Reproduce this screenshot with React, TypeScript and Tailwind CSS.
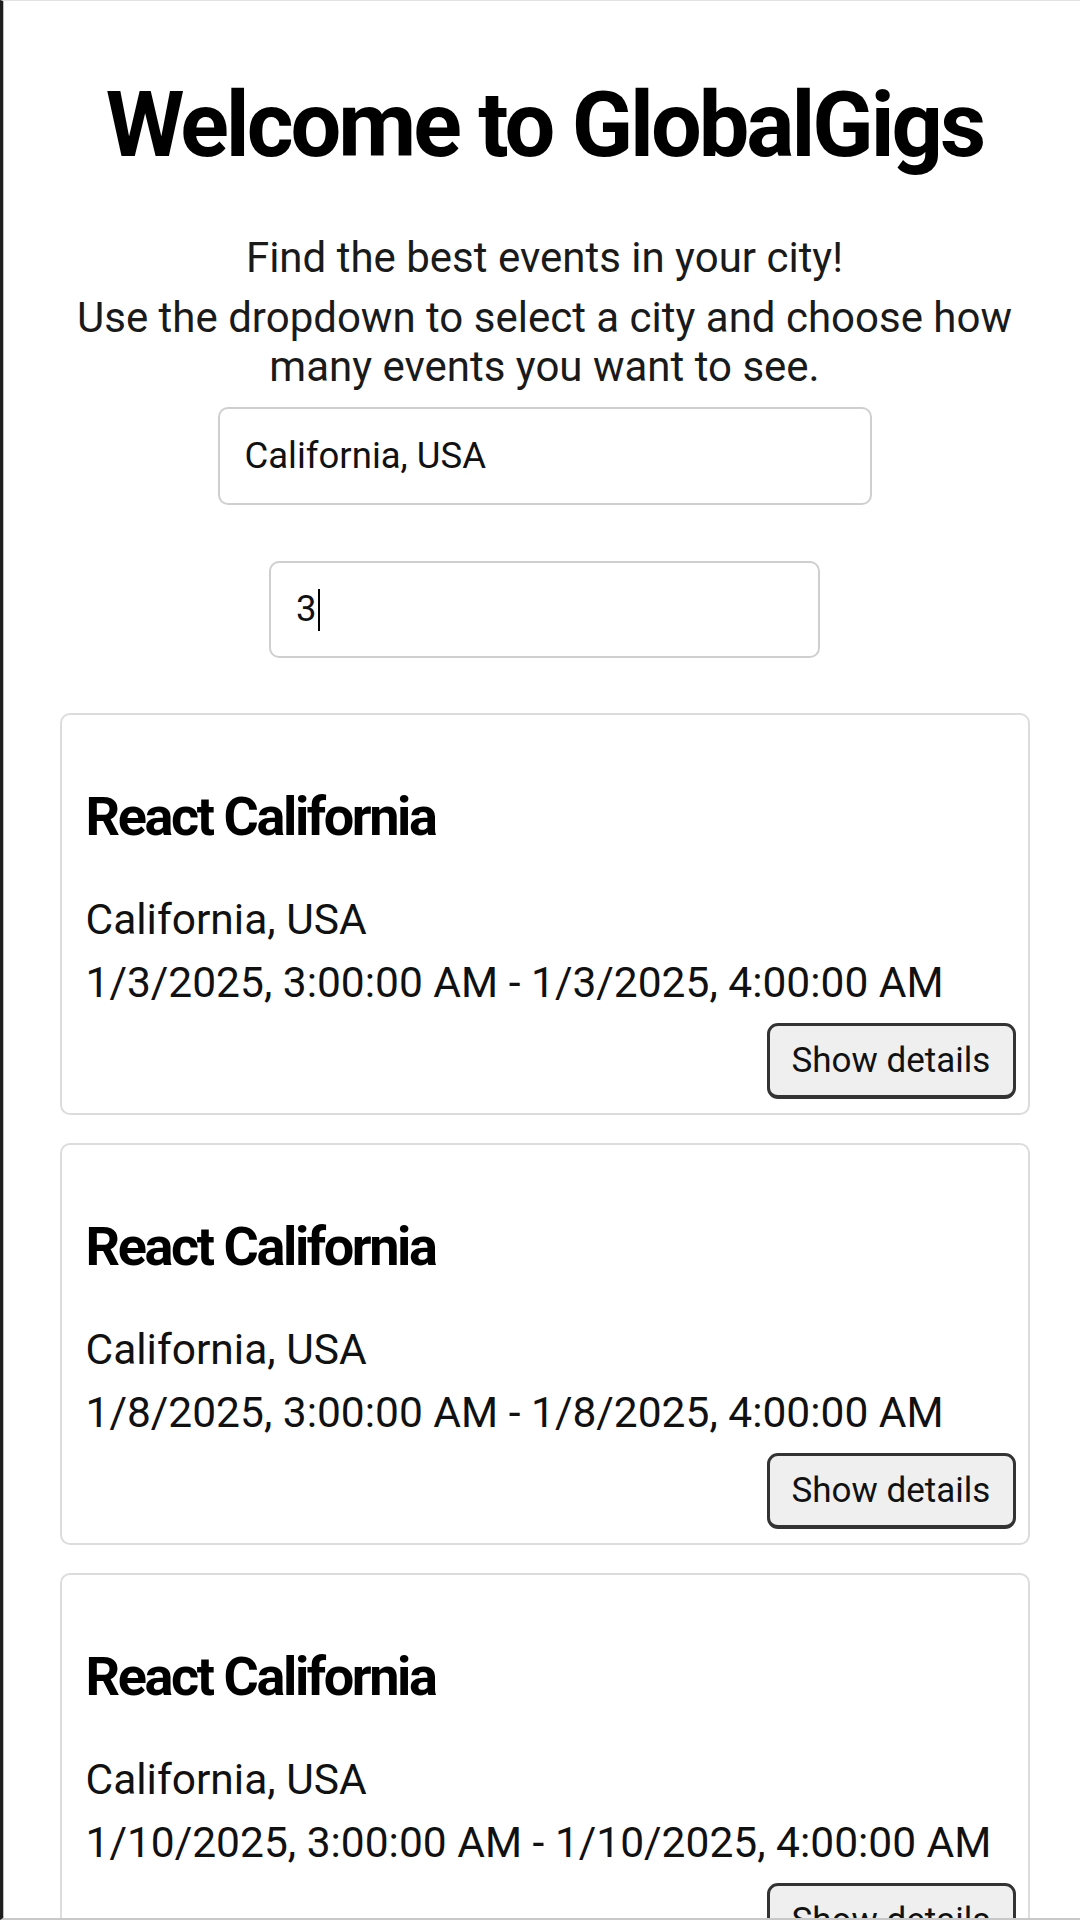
import React from "react";

type Ev = { title: string; location: string; time: string };

const events: Ev[] = [
  {
    title: "React California",
    location: "California, USA",
    time: "1/3/2025, 3:00:00 AM - 1/3/2025, 4:00:00 AM",
  },
  {
    title: "React California",
    location: "California, USA",
    time: "1/8/2025, 3:00:00 AM - 1/8/2025, 4:00:00 AM",
  },
  {
    title: "React California",
    location: "California, USA",
    time: "1/10/2025, 3:00:00 AM - 1/10/2025, 4:00:00 AM",
  },
];

function EventCard({ ev }: { ev: Ev }) {
  return (
    <div className="w-[970px] mx-auto border-2 border-[#dcdcdc] rounded-[10px] pl-[24px] pr-[12px] pt-[70px] pb-[14px]">
      <h2 className="text-[54px] leading-[64px] font-bold text-black tracking-[-2.4px]">{ev.title}</h2>
      <p className="mt-[39px] text-[42.5px] leading-[63px] text-[#111]">{ev.location}</p>
      <p className="text-[42.5px] leading-[63px] text-[#111] whitespace-nowrap">{ev.time}</p>
      <div className="mt-[9px] flex justify-end">
        <button className="w-[249px] h-[76px] shrink-0 rounded-[11px] border-[3px] border-b-[4px] border-[#333] bg-[#efefef] text-[35px] leading-none text-[#111] flex items-center justify-center">
          Show details
        </button>
      </div>
    </div>
  );
}

export default function App() {
  return (
    <div className="h-[1920px] w-[1080px] overflow-hidden bg-white border-l-[3px] border-l-[#1e1e1e] border-t border-t-[#e2e2e2] border-b-2 border-b-[#c8c8c8] font-['Roboto',sans-serif]">
      <div className="h-full pl-[5px] border-l border-l-[#bdbdbd]">
        <div className="h-[80px]" />
        <h1 className="text-[90px] leading-none font-bold text-black text-center tracking-[-3px]">
          Welcome to GlobalGigs
        </h1>
        <p className="mt-[62px] text-[42px] leading-[49px] text-[#1a1a1a] text-center">
          Find the best events in your city!
        </p>
        <p className="mt-[11px] text-[42px] leading-[49px] text-[#1a1a1a] text-center">
          Use the dropdown to select a city and choose how
          <br />
          many events you want to see.
        </p>
        <div className="mt-[16px] mx-auto w-[654px] h-[98px] border-2 border-[#cfcfcf] rounded-[10px] pl-[25px] flex items-center text-[36.5px] text-[#111]">
          California, USA
        </div>
        <div className="mt-[56px] mx-auto w-[551px] h-[97px] border-2 border-[#cfcfcf] rounded-[10px] pl-[25px] flex items-center text-[36.5px] text-[#111]">
          <span>3</span>
          <span className="inline-block w-[2px] h-[42px] bg-black ml-[1px]" />
        </div>
        <div className="mt-[55px] flex flex-col gap-[28px]">
          {events.map((ev, i) => (
            <EventCard key={i} ev={ev} />
          ))}
        </div>
      </div>
    </div>
  );
}
